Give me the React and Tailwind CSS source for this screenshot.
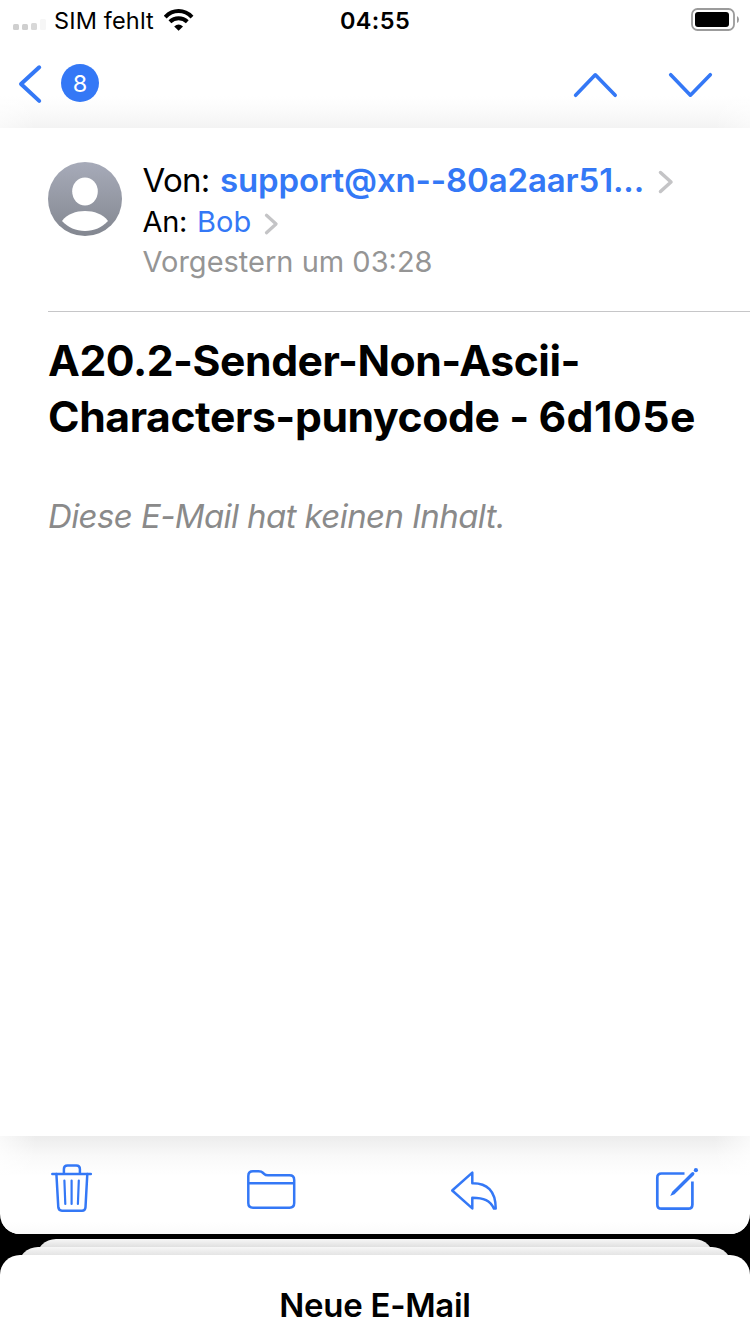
import React from "react";

const stroke = { fill: "none", stroke: "#3478f6", strokeLinecap: "round", strokeLinejoin: "round" };

function StatusBar() {
  return (
    <div className="flex h-10 shrink-0 items-start justify-between">
      <div className="flex w-[320px] items-start pl-[13px]">
        <svg className="mt-[18px] h-3 w-[34px]" viewBox="0 0 34 12">
          <rect x="0" y="6" width="6" height="6" rx="1.5" fill="#cfcfcf" />
          <rect x="9" y="6" width="6" height="6" rx="1.5" fill="#cfcfcf" />
          <rect x="18" y="5" width="6" height="7" rx="1.5" fill="#d8d8d8" />
          <rect x="27" y="1" width="6" height="11" rx="1.5" fill="#f6f6f6" />
        </svg>
        <span className="ml-[7px] w-[110px] text-[23.5px] leading-[42px] tracking-[0.15px]">SIM fehlt</span>
        <svg className="mt-[9px] h-[22px] w-[30px]" viewBox="164 9 30 22">
          <g fill="none" stroke="#000" strokeWidth="4">
            <path d="M165.2 17.1Q171 11.1 178.6 11.1T192 17.1" />
            <path d="M169.9 21.8Q173.6 18.2 178.6 18.2T187.3 21.8" />
          </g>
          <path d="M174.2 26.4Q178.6 22.6 183 26.4L178.6 30.8Z" />
        </svg>
      </div>
      <span className="text-[23.5px] font-semibold leading-[42px] tracking-[0.4px]">04:55</span>
      <div className="flex w-[320px] justify-end pr-[11px]">
        <svg className="mt-2 h-[23px] w-12" viewBox="0 0 48 23">
          <rect x="1" y="1" width="42" height="21" rx="5.5" fill="none" stroke="#9b9b9b" strokeWidth="1.8" />
          <rect x="4" y="4" width="34" height="15" rx="3" fill="#000" />
          <path d="M46 8Q48 9 48 11.5T46 15Z" fill="#9b9b9b" />
        </svg>
      </div>
    </div>
  );
}

function NavBar() {
  return (
    <div className="relative flex h-[88px] shrink-0 items-start">
      <div className="absolute inset-x-0 bottom-0 h-8 bg-[linear-gradient(to_bottom,#ffffff,#fafafa_50%,#f3f3f3)]">
        <div className="flex h-full justify-between">
          <div className="w-9 bg-gradient-to-r from-white/50 to-transparent" />
          <div className="w-9 bg-gradient-to-l from-white/50 to-transparent" />
        </div>
      </div>
      <div className="relative flex w-full items-start">
        <svg className="ml-4 mt-6 h-10 w-7" viewBox="16 64 28 40">
          <path d="M39.2 67.3L21 84L39.2 100.9" {...stroke} strokeWidth="4" />
        </svg>
        <span className="ml-[17px] mt-6 h-[38px] w-[38px] rounded-full bg-[#3478f6] text-center text-[23.5px] leading-[40px] text-white">8</span>
        <svg className="ml-auto mt-7 h-8 w-12" viewBox="572 68 48 32">
          <path d="M575.6 95.3L595.3 74.8L615.2 95.3" {...stroke} strokeWidth="3.6" />
        </svg>
        <svg className="ml-[46px] mr-9 mt-7 h-8 w-12" viewBox="666 68 48 32">
          <path d="M670.7 74.7L690.4 95.2L710.3 74.7" {...stroke} strokeWidth="3.6" />
        </svg>
      </div>
    </div>
  );
}

function Disclosure({ className }) {
  return (
    <svg className={className} viewBox="0 0 16 24">
      <path d="M2.5 2.5L13 12L2.5 21.5" fill="none" stroke="#c4c4c6" strokeWidth="3.5" strokeLinecap="round" strokeLinejoin="round" />
    </svg>
  );
}

function MessageHeader() {
  return (
    <div className="ml-12 flex h-[184px] shrink-0 border-b border-[#c6c6c8] pt-8">
      <svg className="mt-[2px] h-[74px] w-[74px]" viewBox="0 0 74 74">
        <defs>
          <linearGradient id="avatar" x1="0" y1="0" x2="0" y2="1">
            <stop offset="0" stopColor="#a7abb9" />
            <stop offset="1" stopColor="#838790" />
          </linearGradient>
        </defs>
        <circle cx="37" cy="37" r="37" fill="url(#avatar)" />
        <ellipse cx="37" cy="29.5" rx="12.8" ry="14" fill="#fff" />
        <path d="M14 59C19 52 28 49 37 49S55 52 60 59C54 65.5 46 69 37 69S20 65.5 14 59Z" fill="#fff" />
      </svg>
      <div className="ml-[20.5px] flex flex-col">
        <div className="flex h-10 items-center text-[33px] leading-10">
          <span className="w-[77.5px] tracking-[-0.7px]">Von:</span>
          <span className="w-[438px] whitespace-nowrap font-semibold tracking-[-0.13px] text-[#3478f6]">support@xn--80a2aar51...</span>
          <Disclosure className="mt-1 h-6 w-4" />
        </div>
        <div className="mt-[2px] flex h-10 items-center text-[29px] leading-10">
          <span className="w-[54.5px] tracking-[-0.3px]">An:</span>
          <span className="w-[67px] tracking-[0.1px] text-[#3478f6]">Bob</span>
          <Disclosure className="mt-[3px] h-[22px] w-[15px]" />
        </div>
        <div className="h-10 whitespace-nowrap text-[29px] leading-10 text-[#959595]">Vorgestern um 03:28</div>
      </div>
    </div>
  );
}

function Toolbar() {
  return (
    <div className="relative h-[98px] shrink-0">
      <div className="absolute inset-x-0 top-0 h-10 bg-gradient-to-b from-[#ececec] via-[#f9f9f9] to-white">
        <div className="flex h-full justify-between">
          <div className="w-9 bg-gradient-to-r from-white/70 to-transparent" />
          <div className="w-9 bg-gradient-to-l from-white/70 to-transparent" />
        </div>
      </div>
      <div className="absolute inset-x-0 bottom-0 h-3 bg-gradient-to-b from-white to-[#fafafa]" />
      <div className="relative flex h-full items-start justify-between px-12 pt-6">
        <svg className="h-14 w-12" viewBox="48 1160 48 56">
          <g {...stroke} strokeWidth="2.5">
            <path d="M52.3 1173.9H90.8" />
            <path d="M63.9 1173V1169Q63.9 1165.5 67.5 1165.5H76.3Q79.9 1165.5 79.9 1169V1173" />
            <path d="M56.4 1174L58.3 1207.2Q58.6 1210.7 62 1210.7H82Q85.3 1210.7 85.5 1207.2L87.3 1174" />
            <path d="M64.4 1180.5L65.3 1204M71.6 1180.5V1204M78.8 1180.5L77.9 1204" strokeWidth="2.2" />
          </g>
        </svg>
        <svg className="h-14 w-[54px]" viewBox="246 1160 54 56">
          <g {...stroke} strokeWidth="2.5">
            <path d="M248.3 1176Q248.3 1171.3 253 1171.3H258.5Q261.5 1171.3 263.2 1173L264 1173.8Q265.5 1175.3 268 1175.3H289.5Q294.2 1175.3 294.2 1180V1203Q294.2 1207.7 289.5 1207.7H253Q248.3 1207.7 248.3 1203Z" />
            <path d="M248.3 1183.3H294.2" strokeLinecap="butt" />
          </g>
        </svg>
        <svg className="h-14 w-[54px]" viewBox="450 1160 54 56">
          <path d="M472.3 1172.6V1183.3C487 1183 495.7 1191 495.7 1208.6H494C490 1200.5 484 1197.7 472.3 1197.7V1208.4L452.2 1190.5Z" {...stroke} strokeWidth="2.5" />
        </svg>
        <svg className="h-14 w-12" viewBox="654 1160 48 56">
          <path d="M684.5 1173.5H661.5Q657.3 1173.5 657.3 1177.7V1204.5Q657.3 1208.7 661.5 1208.7H688.2Q692.4 1208.7 692.4 1204.5V1181.6" {...stroke} strokeWidth="2.7" strokeLinecap="butt" />
          <path d="M670.2 1196L672.2 1191.8L691.6 1172.5Q693 1171.6 694 1172.6T694 1175L674.5 1194.3Z" fill="#3478f6" />
          <circle cx="695.9" cy="1170.2" r="2.1" fill="#3478f6" />
        </svg>
      </div>
    </div>
  );
}

export default function App() {
  return (
    <div className="flex h-[1334px] w-[750px] flex-col overflow-hidden bg-black font-['Inter',sans-serif] text-black">
      <div className="flex h-[1234px] shrink-0 flex-col overflow-hidden rounded-b-[20px] bg-white">
        <StatusBar />
        <NavBar />
        <MessageHeader />
        <main className="flex-1 pl-12">
          <h1 className="mt-[21px] whitespace-nowrap text-[42.7px] font-bold leading-[56px]">
            <span className="tracking-[-0.47px]">A20.2-Sender-Non-Ascii-</span>
            <br />
            <span className="tracking-[-0.42px]">Characters-punycode - </span>
            <span className="tracking-[0.5px]">6d105e</span>
          </h1>
          <p className="mt-[51px] text-[33px] italic leading-10 tracking-[-0.6px] text-[#8a8a8a]">Diese E-Mail hat keinen Inhalt.</p>
        </main>
        <Toolbar />
      </div>
      <div className="mt-[5px] flex flex-col">
        <div className="mx-9 -mb-8 h-10 rounded-t-[20px] bg-[linear-gradient(to_bottom,#f7f7f7,#e0e0e0_8px)]" />
        <div className="mx-[18px] -mb-8 h-10 rounded-t-[20px] bg-[linear-gradient(to_bottom,#f7f7f7,#e4e4e4_8px)]" />
        <div className="h-[79px] rounded-t-[20px] bg-white pt-[30px] text-center text-[33px] font-semibold leading-10 tracking-[-0.3px]">Neue E-Mail</div>
      </div>
    </div>
  );
}
